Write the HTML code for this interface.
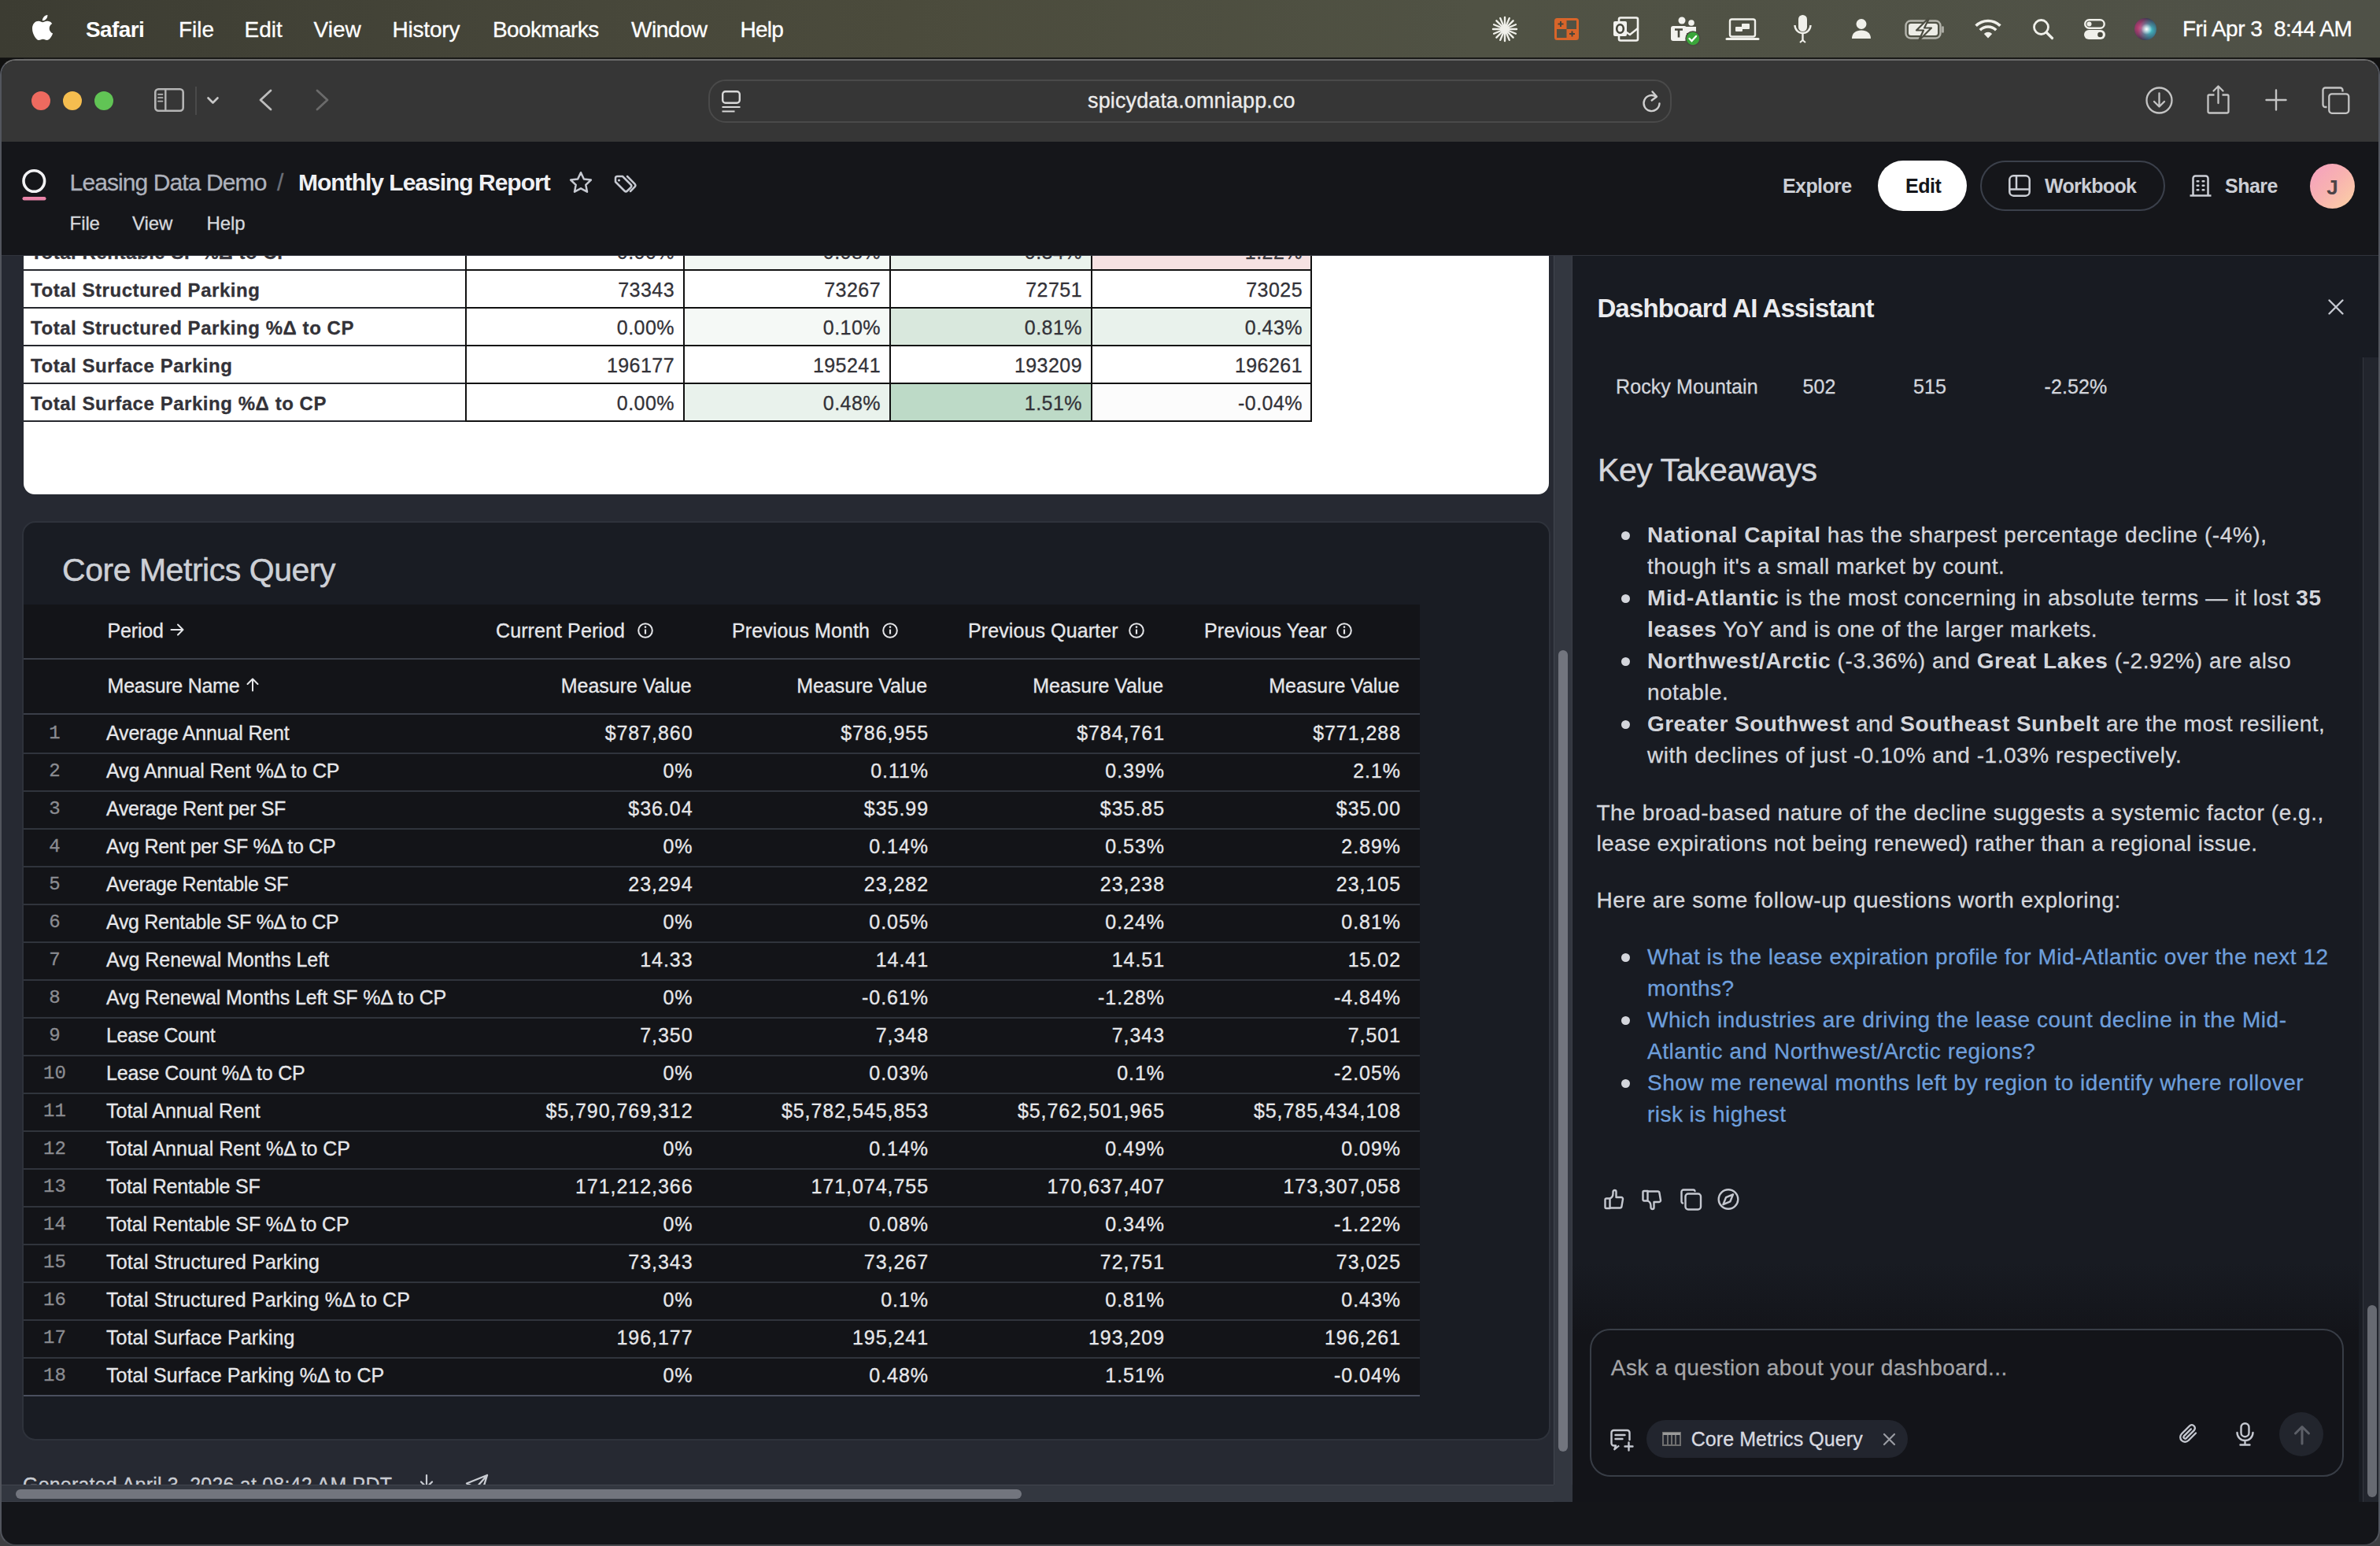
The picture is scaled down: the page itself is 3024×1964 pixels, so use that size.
<!DOCTYPE html><html><head><meta charset="utf-8"><style>
*{box-sizing:border-box;margin:0;padding:0}
html,body{width:3024px;height:1964px;overflow:hidden;background:#141519;font-family:"Liberation Sans",sans-serif;position:relative}
.a{position:absolute}
.t{position:absolute;white-space:nowrap;line-height:1;-webkit-text-stroke-width:0.3px}
.t b{-webkit-text-stroke-width:0}
svg{overflow:visible}
</style></head><body><div class="a" style="left:0px;top:0px;width:3024px;height:75px;background:linear-gradient(90deg,#3c3c32 0%,#47473a 25%,#4b4b3c 38%,#505244 62%,#4f5147 100%);"></div>
<div class="a" style="left:0px;top:73px;width:3024px;height:2px;background:#1a1a18;"></div>
<svg class="a" style="left:41px;top:19px;" width="26" height="32" viewBox="0 0 814 1000"><path fill="#fff" d="M788.1 340.9c-5.8 4.5-108.2 62.2-108.2 190.5 0 148.4 130.3 200.9 134.2 202.2-.6 3.2-20.7 71.9-68.7 141.9-42.8 61.6-87.5 123.1-155.5 123.1s-85.5-39.5-164-39.5c-76.5 0-103.7 40.8-165.9 40.8s-105.6-57-155.5-127C46.7 790.7 0 663 0 541.8c0-194.4 126.4-297.5 250.8-297.5 66.1 0 121.2 43.4 162.7 43.4 39.5 0 101.1-46 176.3-46 28.5 0 130.9 2.6 198.3 99.2zm-234-181.5c31.1-36.9 53.1-88.1 53.1-139.3 0-7.1-.6-14.3-1.9-20.1-50.6 1.9-110.8 33.7-147.1 75.8-28.5 32.4-55.1 83.6-55.1 135.5 0 7.8 1.3 15.6 1.9 18.1 3.2.6 8.4 1.3 13.6 1.3 45.4 0 102.5-30.4 135.5-71.3z"/></svg>
<div class="t" style="top:23.6px;font-size:28px;color:#fff;font-weight:700;-webkit-text-stroke-width:0;letter-spacing:-0.6px;left:109px;">Safari</div>
<div class="t" style="top:23.6px;font-size:28px;color:#fff;left:227px;-webkit-text-stroke:0.3px #fff;">File</div>
<div class="t" style="top:23.6px;font-size:28px;color:#fff;left:310.6px;-webkit-text-stroke:0.3px #fff;">Edit</div>
<div class="t" style="top:23.6px;font-size:28px;color:#fff;left:398.5px;-webkit-text-stroke:0.3px #fff;">View</div>
<div class="t" style="top:23.6px;font-size:28px;color:#fff;letter-spacing:-0.2px;left:498.5px;-webkit-text-stroke:0.3px #fff;">History</div>
<div class="t" style="top:23.6px;font-size:28px;color:#fff;letter-spacing:-0.6px;left:626px;-webkit-text-stroke:0.3px #fff;">Bookmarks</div>
<div class="t" style="top:23.6px;font-size:28px;color:#fff;letter-spacing:-0.5px;left:802px;-webkit-text-stroke:0.3px #fff;">Window</div>
<div class="t" style="top:23.6px;font-size:28px;color:#fff;letter-spacing:-0.8px;left:940.6px;-webkit-text-stroke:0.3px #fff;">Help</div>
<svg class="a" style="left:1896px;top:21px;" width="32" height="32" viewBox="0 0 32 32"><line x1="16" y1="16" x2="31.00" y2="16.00" stroke="#f0f0ea" stroke-width="2.4" stroke-linecap="round"/><line x1="16" y1="16" x2="29.86" y2="21.74" stroke="#f0f0ea" stroke-width="2.4" stroke-linecap="round"/><line x1="16" y1="16" x2="26.61" y2="26.61" stroke="#f0f0ea" stroke-width="2.4" stroke-linecap="round"/><line x1="16" y1="16" x2="21.74" y2="29.86" stroke="#f0f0ea" stroke-width="2.4" stroke-linecap="round"/><line x1="16" y1="16" x2="16.00" y2="31.00" stroke="#f0f0ea" stroke-width="2.4" stroke-linecap="round"/><line x1="16" y1="16" x2="10.26" y2="29.86" stroke="#f0f0ea" stroke-width="2.4" stroke-linecap="round"/><line x1="16" y1="16" x2="5.39" y2="26.61" stroke="#f0f0ea" stroke-width="2.4" stroke-linecap="round"/><line x1="16" y1="16" x2="2.14" y2="21.74" stroke="#f0f0ea" stroke-width="2.4" stroke-linecap="round"/><line x1="16" y1="16" x2="1.00" y2="16.00" stroke="#f0f0ea" stroke-width="2.4" stroke-linecap="round"/><line x1="16" y1="16" x2="2.14" y2="10.26" stroke="#f0f0ea" stroke-width="2.4" stroke-linecap="round"/><line x1="16" y1="16" x2="5.39" y2="5.39" stroke="#f0f0ea" stroke-width="2.4" stroke-linecap="round"/><line x1="16" y1="16" x2="10.26" y2="2.14" stroke="#f0f0ea" stroke-width="2.4" stroke-linecap="round"/><line x1="16" y1="16" x2="16.00" y2="1.00" stroke="#f0f0ea" stroke-width="2.4" stroke-linecap="round"/><line x1="16" y1="16" x2="21.74" y2="2.14" stroke="#f0f0ea" stroke-width="2.4" stroke-linecap="round"/><line x1="16" y1="16" x2="26.61" y2="5.39" stroke="#f0f0ea" stroke-width="2.4" stroke-linecap="round"/><line x1="16" y1="16" x2="29.86" y2="10.26" stroke="#f0f0ea" stroke-width="2.4" stroke-linecap="round"/></svg>
<svg class="a" style="left:1975px;top:23px;" width="31" height="28" viewBox="0 0 31 28"><rect x="1.5" y="1.5" width="28" height="25" rx="2" fill="none" stroke="#d8652a" stroke-width="3"/><rect x="1.5" y="1.5" width="14" height="12.5" fill="#d8652a"/><rect x="15.5" y="14" width="14" height="12.5" fill="#d8652a"/><path d="M4.5 7.5h7M8 4v7M19 20h7M22.5 16.5v7" stroke="#45453b" stroke-width="2"/></svg>
<svg class="a" style="left:2050px;top:21px;" width="33" height="32" viewBox="0 0 33 32"><rect x="7" y="1.5" width="24" height="29" rx="2" fill="none" stroke="#f2f2ee" stroke-width="2.6"/><path d="M12 17l9 6 10-8" fill="none" stroke="#f2f2ee" stroke-width="2.4"/><rect x="0" y="6" width="17" height="19" rx="2" fill="#f2f2ee"/><ellipse cx="8.5" cy="15.5" rx="4.3" ry="5.3" fill="none" stroke="#45463b" stroke-width="2.6"/></svg>
<svg class="a" style="left:2123px;top:21px;" width="38" height="37" viewBox="0 0 38 37"><circle cx="14" cy="5" r="4.5" fill="#f2f2ee"/><circle cx="26" cy="8" r="3.8" fill="#f2f2ee"/><path d="M18 13h14v8h-14z" fill="#f2f2ee"/><rect x="0" y="12" width="20" height="19" rx="3" fill="#f2f2ee"/><path d="M5 16.5h10M10 16.5v10" stroke="#45463b" stroke-width="2.6"/><circle cx="28" cy="28" r="9" fill="#3aa63a" stroke="#4a4b40" stroke-width="1.5"/><path d="M23.5 28l3 3 5.5-6" fill="none" stroke="#fff" stroke-width="2.4" stroke-linecap="round"/></svg>
<svg class="a" style="left:2193px;top:23px;" width="42" height="28" viewBox="0 0 42 28"><rect x="5" y="1.5" width="32" height="22" rx="2.5" fill="none" stroke="#f0f0ea" stroke-width="2.4"/><path d="M1 26.5h40" stroke="#f0f0ea" stroke-width="3" stroke-linecap="round"/><rect x="12" y="11" width="9" height="6" rx="1" fill="#f0f0ea"/><rect x="20" y="7" width="10" height="7" rx="1" fill="#f0f0ea"/></svg>
<svg class="a" style="left:2279px;top:19px;" width="23" height="37" viewBox="0 0 23 37"><rect x="6" y="0" width="11" height="21" rx="5.5" fill="#f0f0ea"/><path d="M1.5 13a10 10 0 0 0 20 0" fill="none" stroke="#f0f0ea" stroke-width="2.4"/><path d="M11.5 23v9" stroke="#f0f0ea" stroke-width="2.4"/><path d="M8 35l3.5-3 3.5 3" fill="none" stroke="#f0f0ea" stroke-width="2"/></svg>
<svg class="a" style="left:2353px;top:24px;" width="24" height="25" viewBox="0 0 24 25"><circle cx="12" cy="6.5" r="6.5" fill="#f0f0ea"/><path d="M0 25c0-7 5-10.5 12-10.5s12 3.5 12 10.5z" fill="#f0f0ea"/></svg>
<svg class="a" style="left:2420px;top:25px;" width="52" height="25" viewBox="0 0 52 25"><rect x="1.5" y="1.5" width="44" height="22" rx="6" fill="none" stroke="#b5b5ad" stroke-width="2.4"/><rect x="5" y="5" width="37" height="15" rx="3" fill="#ececE6"/><path d="M48.5 9.5v6" stroke="#b5b5ad" stroke-width="2.6" stroke-linecap="round"/><path d="M30 -1.5l-15 15h9l-6 13 16-16h-9l6-12z" fill="#ececE6" stroke="#4b4c41" stroke-width="2.2" stroke-linejoin="round"/></svg>
<svg class="a" style="left:2509px;top:24px;" width="34" height="25" viewBox="0 0 34 25"><path d="M17 24.5l-5.2-5.6a7.5 7.5 0 0 1 10.4 0z" fill="#f0f0ea"/><path d="M6.8 14.2a14.5 14.5 0 0 1 20.4 0" fill="none" stroke="#f0f0ea" stroke-width="3.6"/><path d="M1.6 8.8a22 22 0 0 1 30.8 0" fill="none" stroke="#f0f0ea" stroke-width="3.6"/></svg>
<svg class="a" style="left:2583px;top:24px;" width="26" height="26" viewBox="0 0 26 26"><circle cx="10.5" cy="10.5" r="9" fill="none" stroke="#f0f0ea" stroke-width="2.8"/><path d="M17 17l7.5 7.5" stroke="#f0f0ea" stroke-width="3.2" stroke-linecap="round"/></svg>
<svg class="a" style="left:2648px;top:24px;" width="27" height="26" viewBox="0 0 27 26"><rect x="1.2" y="1.2" width="24.5" height="10.5" rx="5.25" fill="none" stroke="#f0f0ea" stroke-width="2.4"/><circle cx="6.5" cy="6.5" r="3" fill="#f0f0ea"/><rect x="0" y="14" width="27" height="12" rx="6" fill="#f0f0ea"/><circle cx="20.5" cy="20" r="3.3" fill="#46473c"/></svg>
<svg class="a" style="left:2712px;top:23px;" width="28" height="28" viewBox="0 0 28 28"><defs><radialGradient id="sg1" cx="30%" cy="45%" r="55%"><stop offset="0" stop-color="#e0407a"/><stop offset="1" stop-color="#e0407a" stop-opacity="0"/></radialGradient><radialGradient id="sg2" cx="70%" cy="55%" r="55%"><stop offset="0" stop-color="#40c8d0"/><stop offset="1" stop-color="#40c8d0" stop-opacity="0"/></radialGradient><radialGradient id="sg3" cx="55%" cy="50%" r="25%"><stop offset="0" stop-color="#fff"/><stop offset="1" stop-color="#fff" stop-opacity="0"/></radialGradient></defs><circle cx="14" cy="14" r="14" fill="#3a3550"/><circle cx="14" cy="14" r="14" fill="url(#sg1)"/><circle cx="14" cy="14" r="14" fill="url(#sg2)"/><circle cx="14" cy="14" r="14" fill="url(#sg3)"/></svg>
<div class="t" style="top:22.6px;font-size:28px;color:#fff;letter-spacing:-0.489px;left:2773px;">Fri Apr 3&nbsp;&nbsp;8:44 AM</div>
<div class="a" style="left:0px;top:1938px;width:30px;height:26px;background:#3e3f42;"></div>
<div class="a" style="left:2994px;top:1938px;width:30px;height:26px;background:#3e3f42;"></div>
<div class="a" style="left:0px;top:74px;width:30px;height:26px;background:#101010;"></div>
<div class="a" style="left:2994px;top:74px;width:30px;height:26px;background:#101010;"></div>
<div class="a" style="left:0;top:75px;width:3024px;height:1889px;background:#141519;border-radius:20px;border:2px solid #52555d;border-top-color:#6c6c6c;border-bottom-color:#45474d"></div>
<div class="a" style="left:2px;top:77px;width:3020px;height:103px;background:#363636;border-radius:18px 18px 0 0"></div>
<div class="a" style="left:40px;top:116px;width:24px;height:24px;border-radius:50%;background:#ee6a5f"></div>
<div class="a" style="left:80px;top:116px;width:24px;height:24px;border-radius:50%;background:#f5bd4f"></div>
<div class="a" style="left:120px;top:116px;width:24px;height:24px;border-radius:50%;background:#61c455"></div>
<svg class="a" style="left:196px;top:112px;" width="38" height="30" viewBox="0 0 38 30"><rect x="1.3" y="1.3" width="35.4" height="27.4" rx="4" fill="none" stroke="#b4b4b4" stroke-width="2.6"/><path d="M14.3 1.5v27" stroke="#b4b4b4" stroke-width="2.4"/><path d="M5 7.8h5.5M5 12.2h5.5M5 16.6h5.5" stroke="#b4b4b4" stroke-width="1.8" stroke-linecap="round"/></svg>
<div class="a" style="left:248px;top:110px;width:2px;height:36px;background:#4a4a4a;"></div>
<svg class="a" style="left:263px;top:123px;" width="15" height="9" viewBox="0 0 15 9"><path d="M1.5 1.5l6 6 6-6" fill="none" stroke="#c8c8c8" stroke-width="2.6" stroke-linecap="round" stroke-linejoin="round"/></svg>
<svg class="a" style="left:328px;top:113px;" width="18" height="28" viewBox="0 0 18 28"><path d="M16 2l-13 12 13 12" fill="none" stroke="#bdbdbd" stroke-width="2.8" stroke-linecap="round" stroke-linejoin="round"/></svg>
<svg class="a" style="left:401px;top:113px;" width="18" height="28" viewBox="0 0 18 28"><path d="M2 2l13 12-13 12" fill="none" stroke="#6b6b6b" stroke-width="2.8" stroke-linecap="round" stroke-linejoin="round"/></svg>
<div class="a" style="left:900px;top:101px;width:1224px;height:55px;border-radius:22px;border:2px solid #4a4a4a;background:#363636"></div>
<svg class="a" style="left:917px;top:115px;" width="24" height="28" viewBox="0 0 24 28"><rect x="1.2" y="1.2" width="21.6" height="14.6" rx="3.5" fill="none" stroke="#d8d8d8" stroke-width="2.4"/><path d="M0.5 21h23M0.5 26.5h16" stroke="#d8d8d8" stroke-width="2.2"/></svg>
<div class="t" style="top:115.1px;font-size:27px;color:#ececec;letter-spacing:0.129px;left:1382px;-webkit-text-stroke:0.3px #ececec;">spicydata.omniapp.co</div>
<svg class="a" style="left:2087px;top:115px;" width="25" height="28" viewBox="0 0 25 28"><path d="M21.5 16.5a10 10 0 1 1-4.2-8.6" fill="none" stroke="#cfcfcf" stroke-width="2.4" stroke-linecap="round"/><path d="M12.5 1.5l5.5 6.2-6.3 4.8" fill="none" stroke="#cfcfcf" stroke-width="2.4" stroke-linecap="round" stroke-linejoin="round"/></svg>
<svg class="a" style="left:2726px;top:110px;" width="35" height="35" viewBox="0 0 35 35"><circle cx="17.5" cy="17.5" r="16" fill="none" stroke="#c4c4c4" stroke-width="2.3"/><path d="M17.5 8.5v17M11 19l6.5 6.5 6.5-6.5" fill="none" stroke="#c4c4c4" stroke-width="2.3" stroke-linecap="round" stroke-linejoin="round"/></svg>
<svg class="a" style="left:2804px;top:108px;" width="30" height="37" viewBox="0 0 30 37"><path d="M9.5 12.5h-6.5a1.5 1.5 0 0 0-1.5 1.5v19.5a2 2 0 0 0 2 2h22a2 2 0 0 0 2-2v-19.5a1.5 1.5 0 0 0-1.5-1.5h-6.5" fill="none" stroke="#c4c4c4" stroke-width="2.3"/><path d="M14.5 23v-21M8.5 7.5l6-6 6 6" fill="none" stroke="#c4c4c4" stroke-width="2.3" stroke-linecap="round" stroke-linejoin="round"/></svg>
<svg class="a" style="left:2878px;top:113px;" width="28" height="28" viewBox="0 0 28 28"><path d="M14 1.5v25M1.5 14h25" stroke="#c4c4c4" stroke-width="2.4" stroke-linecap="round"/></svg>
<svg class="a" style="left:2950px;top:110px;" width="36" height="35" viewBox="0 0 36 35"><path d="M6.5 26h-2a3 3 0 0 1-3-3v-18.5a3 3 0 0 1 3-3h19a3 3 0 0 1 3 3v2" fill="none" stroke="#c4c4c4" stroke-width="2.3"/><rect x="9.3" y="9.3" width="25" height="24.5" rx="3.5" fill="none" stroke="#c4c4c4" stroke-width="2.3"/></svg>
<div class="a" style="left:2px;top:180px;width:3020px;height:145px;background:#15161a;border-bottom:1px solid #30333c"></div>
<svg class="a" style="left:28px;top:214px;" width="31" height="41" viewBox="0 0 31 41"><circle cx="15.3" cy="16" r="13.3" fill="none" stroke="#f2f2f4" stroke-width="3.6"/><rect x="0.5" y="36" width="30" height="4.5" rx="2.2" fill="#e884a8"/></svg>
<div class="t" style="top:217.1px;font-size:30px;color:#aeb2bc;letter-spacing:-0.9px;left:88.6px;">Leasing Data Demo</div>
<div class="t" style="top:217.1px;font-size:30px;color:#6d717a;left:352px;">/</div>
<div class="t" style="top:217.1px;font-size:30px;color:#eff0f3;font-weight:700;-webkit-text-stroke-width:0;letter-spacing:-1.0px;left:379px;">Monthly Leasing Report</div>
<svg class="a" style="left:723px;top:217px;" width="30" height="29" viewBox="0 0 30 29"><path d="M15 2.2l3.9 8.3 9 1.1-6.6 6.2 1.7 8.9-8-4.4-8 4.4 1.7-8.9-6.6-6.2 9-1.1z" fill="none" stroke="#c6c9d1" stroke-width="2.5" stroke-linejoin="round"/></svg>
<svg class="a" style="left:780px;top:222px;" width="28" height="23" viewBox="0 0 28 23"><path d="M2 4.5a2.5 2.5 0 0 1 2.5-2.5h6.5l10.5 10.5a2.5 2.5 0 0 1 0 3.5l-4.5 4.5a2.5 2.5 0 0 1-3.5 0l-11.5-11.5z" fill="none" stroke="#c6c9d1" stroke-width="2.5" stroke-linejoin="round"/><circle cx="6.5" cy="7" r="1.6" fill="#c6c9d1"/><path d="M17 2l9.5 9.5a3 3 0 0 1 0 4l-5.5 5.5" fill="none" stroke="#c6c9d1" stroke-width="2.5" stroke-linecap="round"/></svg>
<div class="t" style="top:271.5px;font-size:24px;color:#d6d8dd;letter-spacing:-0.1px;left:88.6px;">File</div>
<div class="t" style="top:271.5px;font-size:24px;color:#d6d8dd;letter-spacing:-0.1px;left:168px;">View</div>
<div class="t" style="top:271.5px;font-size:24px;color:#d6d8dd;letter-spacing:-0.1px;left:262.5px;">Help</div>
<div class="t" style="top:223.8px;font-size:25px;color:#cbced5;font-weight:700;-webkit-text-stroke-width:0;letter-spacing:-0.6px;left:2265px;">Explore</div>
<div class="a" style="left:2386px;top:204px;width:113px;height:64px;border-radius:32px;background:#fff"></div>
<div class="t" style="top:223.8px;font-size:25px;color:#15161a;font-weight:700;-webkit-text-stroke-width:0;letter-spacing:-0.5px;left:2421px;">Edit</div>
<div class="a" style="left:2516px;top:204px;width:235px;height:64px;border-radius:32px;border:2px solid #3b404b"></div>
<svg class="a" style="left:2552px;top:222px;" width="28" height="28" viewBox="0 0 28 28"><rect x="1.3" y="1.3" width="25.4" height="25.4" rx="5" fill="none" stroke="#cbced5" stroke-width="2.5"/><path d="M10 1.5v17M1.5 18.5h25" stroke="#cbced5" stroke-width="2.5"/></svg>
<div class="t" style="top:223.8px;font-size:25px;color:#cbced5;font-weight:700;-webkit-text-stroke-width:0;letter-spacing:-0.7px;left:2598px;">Workbook</div>
<svg class="a" style="left:2782px;top:222px;" width="28" height="28" viewBox="0 0 28 28"><path d="M4.5 26.5v-22a3 3 0 0 1 3-3h13a3 3 0 0 1 3 3v22M0.5 26.5h27" fill="none" stroke="#cbced5" stroke-width="2.5"/><g fill="#cbced5"><rect x="8.5" y="7" width="4" height="2.6" rx="1"/><rect x="15.5" y="7" width="4" height="2.6" rx="1"/><rect x="8.5" y="12.5" width="4" height="2.6" rx="1"/><rect x="15.5" y="12.5" width="4" height="2.6" rx="1"/><rect x="8.5" y="18" width="4" height="2.6" rx="1"/><rect x="15.5" y="18" width="4" height="2.6" rx="1"/></g></svg>
<div class="t" style="top:223.8px;font-size:25px;color:#cbced5;font-weight:700;-webkit-text-stroke-width:0;letter-spacing:-0.5px;left:2827px;">Share</div>
<div class="a" style="left:2935px;top:208px;width:57px;height:57px;border-radius:50%;background:linear-gradient(135deg,#f59fc0 0%,#f8b3b0 50%,#fcd2a4 100%)"></div>
<div class="t" style="top:225.0px;font-size:26px;color:#4d4447;font-weight:700;-webkit-text-stroke-width:0;left:2963.5px;transform:translateX(-50%);">J</div>
<div class="a" style="left:2px;top:325px;width:1996px;height:1583px;background:#262932;"></div>
<div class="a" style="left:30px;top:325px;width:1938px;height:303px;background:#fff;border-radius:0 0 14px 14px"></div>
<div class="a" style="left:870px;top:325px;width:261px;height:18px;background:#f3f8f4;"></div>
<div class="a" style="left:1132px;top:325px;width:255px;height:18px;background:#eaf3ed;"></div>
<div class="a" style="left:1388px;top:325px;width:278px;height:18px;background:#f6e1e2;"></div>
<div class="a" style="left:870px;top:391px;width:261px;height:48px;background:#f5f9f6;"></div>
<div class="a" style="left:1132px;top:391px;width:255px;height:48px;background:#d9e8dd;"></div>
<div class="a" style="left:1388px;top:391px;width:278px;height:48px;background:#e9f2ec;"></div>
<div class="a" style="left:870px;top:487px;width:261px;height:48px;background:#e9f2ec;"></div>
<div class="a" style="left:1132px;top:487px;width:255px;height:48px;background:#bddac7;"></div>
<div class="a" style="left:1388px;top:487px;width:278px;height:48px;background:#fcfcfc;"></div>
<div class="a" style="left:30px;top:342px;width:562px;height:2px;background:#26282e;"></div>
<div class="a" style="left:592px;top:342px;width:1075px;height:2px;background:#111;"></div>
<div class="a" style="left:30px;top:390px;width:562px;height:2px;background:#26282e;"></div>
<div class="a" style="left:592px;top:390px;width:1075px;height:2px;background:#111;"></div>
<div class="a" style="left:30px;top:438px;width:562px;height:2px;background:#26282e;"></div>
<div class="a" style="left:592px;top:438px;width:1075px;height:2px;background:#111;"></div>
<div class="a" style="left:30px;top:486px;width:562px;height:2px;background:#26282e;"></div>
<div class="a" style="left:592px;top:486px;width:1075px;height:2px;background:#111;"></div>
<div class="a" style="left:30px;top:534px;width:562px;height:2px;background:#26282e;"></div>
<div class="a" style="left:592px;top:534px;width:1075px;height:2px;background:#111;"></div>
<div class="a" style="left:591px;top:325px;width:2px;height:211px;background:#111;"></div>
<div class="a" style="left:868px;top:325px;width:2px;height:211px;background:#111;"></div>
<div class="a" style="left:1130px;top:325px;width:2px;height:211px;background:#111;"></div>
<div class="a" style="left:1386px;top:325px;width:2px;height:211px;background:#111;"></div>
<div class="a" style="left:1665px;top:325px;width:2px;height:211px;background:#111;"></div>
<div class="a" style="left:30px;top:325px;width:1938px;height:300px;overflow:hidden">
<div class="t" style="left:9px;top:-16.3px;font-size:24px;font-weight:700;color:#333238;letter-spacing:0.55px">Total Rentable SF %Δ to CP</div>
<div class="t" style="right:1111px;top:-17.2px;font-size:25px;color:#333238;letter-spacing:0.45px">0.00%</div>
<div class="t" style="right:849px;top:-17.2px;font-size:25px;color:#333238;letter-spacing:0.45px">0.08%</div>
<div class="t" style="right:593px;top:-17.2px;font-size:25px;color:#333238;letter-spacing:0.45px">0.34%</div>
<div class="t" style="right:313px;top:-17.2px;font-size:25px;color:#333238;letter-spacing:0.45px">-1.22%</div>
<div class="t" style="left:9px;top:31.7px;font-size:24px;font-weight:700;color:#333238;letter-spacing:0.55px">Total Structured Parking</div>
<div class="t" style="right:1111px;top:30.8px;font-size:25px;color:#333238;letter-spacing:0.45px">73343</div>
<div class="t" style="right:849px;top:30.8px;font-size:25px;color:#333238;letter-spacing:0.45px">73267</div>
<div class="t" style="right:593px;top:30.8px;font-size:25px;color:#333238;letter-spacing:0.45px">72751</div>
<div class="t" style="right:313px;top:30.8px;font-size:25px;color:#333238;letter-spacing:0.45px">73025</div>
<div class="t" style="left:9px;top:79.7px;font-size:24px;font-weight:700;color:#333238;letter-spacing:0.55px">Total Structured Parking %Δ to CP</div>
<div class="t" style="right:1111px;top:78.8px;font-size:25px;color:#333238;letter-spacing:0.45px">0.00%</div>
<div class="t" style="right:849px;top:78.8px;font-size:25px;color:#333238;letter-spacing:0.45px">0.10%</div>
<div class="t" style="right:593px;top:78.8px;font-size:25px;color:#333238;letter-spacing:0.45px">0.81%</div>
<div class="t" style="right:313px;top:78.8px;font-size:25px;color:#333238;letter-spacing:0.45px">0.43%</div>
<div class="t" style="left:9px;top:127.7px;font-size:24px;font-weight:700;color:#333238;letter-spacing:0.55px">Total Surface Parking</div>
<div class="t" style="right:1111px;top:126.8px;font-size:25px;color:#333238;letter-spacing:0.45px">196177</div>
<div class="t" style="right:849px;top:126.8px;font-size:25px;color:#333238;letter-spacing:0.45px">195241</div>
<div class="t" style="right:593px;top:126.8px;font-size:25px;color:#333238;letter-spacing:0.45px">193209</div>
<div class="t" style="right:313px;top:126.8px;font-size:25px;color:#333238;letter-spacing:0.45px">196261</div>
<div class="t" style="left:9px;top:175.7px;font-size:24px;font-weight:700;color:#333238;letter-spacing:0.55px">Total Surface Parking %Δ to CP</div>
<div class="t" style="right:1111px;top:174.8px;font-size:25px;color:#333238;letter-spacing:0.45px">0.00%</div>
<div class="t" style="right:849px;top:174.8px;font-size:25px;color:#333238;letter-spacing:0.45px">0.48%</div>
<div class="t" style="right:593px;top:174.8px;font-size:25px;color:#333238;letter-spacing:0.45px">1.51%</div>
<div class="t" style="right:313px;top:174.8px;font-size:25px;color:#333238;letter-spacing:0.45px">-0.04%</div>
</div>
<div class="a" style="left:28px;top:662px;width:1942px;height:1168px;background:#191c23;border:2px solid #2e323b;border-radius:17px"></div>
<div class="t" style="top:704.0px;font-size:41px;color:#cdd0d6;letter-spacing:-0.466px;left:79px;-webkit-text-stroke:0.5px #cdd0d6;">Core Metrics Query</div>
<div class="a" style="left:30px;top:768px;width:1774px;height:1004px;background:#131418;"></div>
<div class="a" style="left:30px;top:836px;width:1774px;height:2px;background:#3a3e48;"></div>
<div class="a" style="left:30px;top:906px;width:1774px;height:2px;background:#3a3e48;"></div>
<div class="t" style="top:788.8px;font-size:25px;color:#e6e7ea;letter-spacing:-0.173px;left:136.6px;">Period</div>
<svg class="a" style="left:216px;top:792px;" width="18" height="16" viewBox="0 0 18 16"><path d="M1.5 8h15M10 1.5l6.5 6.5-6.5 6.5" fill="none" stroke="#e6e7ea" stroke-width="2" stroke-linecap="round" stroke-linejoin="round"/></svg>
<div class="t" style="top:858.8px;font-size:25px;color:#e6e7ea;letter-spacing:-0.264px;left:136.6px;">Measure Name</div>
<svg class="a" style="left:313px;top:861px;" width="16" height="18" viewBox="0 0 16 18"><path d="M8 16.5v-15M1.5 8l6.5-6.5 6.5 6.5" fill="none" stroke="#e6e7ea" stroke-width="2" stroke-linecap="round" stroke-linejoin="round"/></svg>
<div class="t" style="top:788.8px;font-size:25px;color:#e6e7ea;letter-spacing:0.1px;left:630px;">Current Period</div>
<svg class="a" style="left:810px;top:791px;" width="20" height="20" viewBox="0 0 20 20"><circle cx="10" cy="10" r="8.8" fill="none" stroke="#e4e5e8" stroke-width="2"/><path d="M10 8.5v6" stroke="#e4e5e8" stroke-width="2.2"/><circle cx="10" cy="5.6" r="1.3" fill="#e4e5e8"/></svg>
<div class="t" style="top:788.8px;font-size:25px;color:#e6e7ea;letter-spacing:0.1px;left:930px;">Previous Month</div>
<svg class="a" style="left:1120.5px;top:791px;" width="20" height="20" viewBox="0 0 20 20"><circle cx="10" cy="10" r="8.8" fill="none" stroke="#e4e5e8" stroke-width="2"/><path d="M10 8.5v6" stroke="#e4e5e8" stroke-width="2.2"/><circle cx="10" cy="5.6" r="1.3" fill="#e4e5e8"/></svg>
<div class="t" style="top:788.8px;font-size:25px;color:#e6e7ea;letter-spacing:0.1px;left:1230px;">Previous Quarter</div>
<svg class="a" style="left:1434px;top:791px;" width="20" height="20" viewBox="0 0 20 20"><circle cx="10" cy="10" r="8.8" fill="none" stroke="#e4e5e8" stroke-width="2"/><path d="M10 8.5v6" stroke="#e4e5e8" stroke-width="2.2"/><circle cx="10" cy="5.6" r="1.3" fill="#e4e5e8"/></svg>
<div class="t" style="top:788.8px;font-size:25px;color:#e6e7ea;letter-spacing:0.1px;left:1530px;">Previous Year</div>
<svg class="a" style="left:1697.5px;top:791px;" width="20" height="20" viewBox="0 0 20 20"><circle cx="10" cy="10" r="8.8" fill="none" stroke="#e4e5e8" stroke-width="2"/><path d="M10 8.5v6" stroke="#e4e5e8" stroke-width="2.2"/><circle cx="10" cy="5.6" r="1.3" fill="#e4e5e8"/></svg>
<div class="t" style="top:858.8px;font-size:25px;color:#e6e7ea;letter-spacing:-0.05px;right:2145.5px;">Measure Value</div>
<div class="t" style="top:858.8px;font-size:25px;color:#e6e7ea;letter-spacing:-0.05px;right:1846px;">Measure Value</div>
<div class="t" style="top:858.8px;font-size:25px;color:#e6e7ea;letter-spacing:-0.05px;right:1546px;">Measure Value</div>
<div class="t" style="top:858.8px;font-size:25px;color:#e6e7ea;letter-spacing:-0.05px;right:1246px;">Measure Value</div>
<div class="t" style="top:920.1px;font-size:24px;color:#8b8c91;font-family:'Liberation Mono',monospace;left:69.5px;transform:translateX(-50%);">1</div>
<div class="t" style="top:919.2px;font-size:25px;color:#e6e7ea;letter-spacing:-0.174px;left:135px;">Average Annual Rent</div>
<div class="t" style="top:919.2px;font-size:25px;color:#e6e7ea;letter-spacing:0.95px;right:2143.5px;">$787,860</div>
<div class="t" style="top:919.2px;font-size:25px;color:#e6e7ea;letter-spacing:0.95px;right:1844px;">$786,955</div>
<div class="t" style="top:919.2px;font-size:25px;color:#e6e7ea;letter-spacing:0.95px;right:1544px;">$784,761</div>
<div class="t" style="top:919.2px;font-size:25px;color:#e6e7ea;letter-spacing:0.95px;right:1244px;">$771,288</div>
<div class="a" style="left:30px;top:956px;width:1774px;height:2px;background:#30343c;"></div>
<div class="t" style="top:968.1px;font-size:24px;color:#8b8c91;font-family:'Liberation Mono',monospace;left:69.5px;transform:translateX(-50%);">2</div>
<div class="t" style="top:967.2px;font-size:25px;color:#e6e7ea;letter-spacing:-0.142px;left:135px;">Avg Annual Rent %Δ to CP</div>
<div class="t" style="top:967.2px;font-size:25px;color:#e6e7ea;letter-spacing:0.95px;right:2143.5px;">0%</div>
<div class="t" style="top:967.2px;font-size:25px;color:#e6e7ea;letter-spacing:0.95px;right:1844px;">0.11%</div>
<div class="t" style="top:967.2px;font-size:25px;color:#e6e7ea;letter-spacing:0.95px;right:1544px;">0.39%</div>
<div class="t" style="top:967.2px;font-size:25px;color:#e6e7ea;letter-spacing:0.95px;right:1244px;">2.1%</div>
<div class="a" style="left:30px;top:1004px;width:1774px;height:2px;background:#30343c;"></div>
<div class="t" style="top:1016.1px;font-size:24px;color:#8b8c91;font-family:'Liberation Mono',monospace;left:69.5px;transform:translateX(-50%);">3</div>
<div class="t" style="top:1015.2px;font-size:25px;color:#e6e7ea;letter-spacing:-0.333px;left:135px;">Average Rent per SF</div>
<div class="t" style="top:1015.2px;font-size:25px;color:#e6e7ea;letter-spacing:0.95px;right:2143.5px;">$36.04</div>
<div class="t" style="top:1015.2px;font-size:25px;color:#e6e7ea;letter-spacing:0.95px;right:1844px;">$35.99</div>
<div class="t" style="top:1015.2px;font-size:25px;color:#e6e7ea;letter-spacing:0.95px;right:1544px;">$35.85</div>
<div class="t" style="top:1015.2px;font-size:25px;color:#e6e7ea;letter-spacing:0.95px;right:1244px;">$35.00</div>
<div class="a" style="left:30px;top:1052px;width:1774px;height:2px;background:#30343c;"></div>
<div class="t" style="top:1064.1px;font-size:24px;color:#8b8c91;font-family:'Liberation Mono',monospace;left:69.5px;transform:translateX(-50%);">4</div>
<div class="t" style="top:1063.2px;font-size:25px;color:#e6e7ea;letter-spacing:-0.293px;left:135px;">Avg Rent per SF %Δ to CP</div>
<div class="t" style="top:1063.2px;font-size:25px;color:#e6e7ea;letter-spacing:0.95px;right:2143.5px;">0%</div>
<div class="t" style="top:1063.2px;font-size:25px;color:#e6e7ea;letter-spacing:0.95px;right:1844px;">0.14%</div>
<div class="t" style="top:1063.2px;font-size:25px;color:#e6e7ea;letter-spacing:0.95px;right:1544px;">0.53%</div>
<div class="t" style="top:1063.2px;font-size:25px;color:#e6e7ea;letter-spacing:0.95px;right:1244px;">2.89%</div>
<div class="a" style="left:30px;top:1100px;width:1774px;height:2px;background:#30343c;"></div>
<div class="t" style="top:1112.1px;font-size:24px;color:#8b8c91;font-family:'Liberation Mono',monospace;left:69.5px;transform:translateX(-50%);">5</div>
<div class="t" style="top:1111.2px;font-size:25px;color:#e6e7ea;letter-spacing:-0.388px;left:135px;">Average Rentable SF</div>
<div class="t" style="top:1111.2px;font-size:25px;color:#e6e7ea;letter-spacing:0.95px;right:2143.5px;">23,294</div>
<div class="t" style="top:1111.2px;font-size:25px;color:#e6e7ea;letter-spacing:0.95px;right:1844px;">23,282</div>
<div class="t" style="top:1111.2px;font-size:25px;color:#e6e7ea;letter-spacing:0.95px;right:1544px;">23,238</div>
<div class="t" style="top:1111.2px;font-size:25px;color:#e6e7ea;letter-spacing:0.95px;right:1244px;">23,105</div>
<div class="a" style="left:30px;top:1148px;width:1774px;height:2px;background:#30343c;"></div>
<div class="t" style="top:1160.1px;font-size:24px;color:#8b8c91;font-family:'Liberation Mono',monospace;left:69.5px;transform:translateX(-50%);">6</div>
<div class="t" style="top:1159.2px;font-size:25px;color:#e6e7ea;letter-spacing:-0.301px;left:135px;">Avg Rentable SF %Δ to CP</div>
<div class="t" style="top:1159.2px;font-size:25px;color:#e6e7ea;letter-spacing:0.95px;right:2143.5px;">0%</div>
<div class="t" style="top:1159.2px;font-size:25px;color:#e6e7ea;letter-spacing:0.95px;right:1844px;">0.05%</div>
<div class="t" style="top:1159.2px;font-size:25px;color:#e6e7ea;letter-spacing:0.95px;right:1544px;">0.24%</div>
<div class="t" style="top:1159.2px;font-size:25px;color:#e6e7ea;letter-spacing:0.95px;right:1244px;">0.81%</div>
<div class="a" style="left:30px;top:1196px;width:1774px;height:2px;background:#30343c;"></div>
<div class="t" style="top:1208.1px;font-size:24px;color:#8b8c91;font-family:'Liberation Mono',monospace;left:69.5px;transform:translateX(-50%);">7</div>
<div class="t" style="top:1207.2px;font-size:25px;color:#e6e7ea;letter-spacing:-0.065px;left:135px;">Avg Renewal Months Left</div>
<div class="t" style="top:1207.2px;font-size:25px;color:#e6e7ea;letter-spacing:0.95px;right:2143.5px;">14.33</div>
<div class="t" style="top:1207.2px;font-size:25px;color:#e6e7ea;letter-spacing:0.95px;right:1844px;">14.41</div>
<div class="t" style="top:1207.2px;font-size:25px;color:#e6e7ea;letter-spacing:0.95px;right:1544px;">14.51</div>
<div class="t" style="top:1207.2px;font-size:25px;color:#e6e7ea;letter-spacing:0.95px;right:1244px;">15.02</div>
<div class="a" style="left:30px;top:1244px;width:1774px;height:2px;background:#30343c;"></div>
<div class="t" style="top:1256.1px;font-size:24px;color:#8b8c91;font-family:'Liberation Mono',monospace;left:69.5px;transform:translateX(-50%);">8</div>
<div class="t" style="top:1255.2px;font-size:25px;color:#e6e7ea;letter-spacing:-0.149px;left:135px;">Avg Renewal Months Left SF %Δ to CP</div>
<div class="t" style="top:1255.2px;font-size:25px;color:#e6e7ea;letter-spacing:0.95px;right:2143.5px;">0%</div>
<div class="t" style="top:1255.2px;font-size:25px;color:#e6e7ea;letter-spacing:0.95px;right:1844px;">-0.61%</div>
<div class="t" style="top:1255.2px;font-size:25px;color:#e6e7ea;letter-spacing:0.95px;right:1544px;">-1.28%</div>
<div class="t" style="top:1255.2px;font-size:25px;color:#e6e7ea;letter-spacing:0.95px;right:1244px;">-4.84%</div>
<div class="a" style="left:30px;top:1292px;width:1774px;height:2px;background:#30343c;"></div>
<div class="t" style="top:1304.1px;font-size:24px;color:#8b8c91;font-family:'Liberation Mono',monospace;left:69.5px;transform:translateX(-50%);">9</div>
<div class="t" style="top:1303.2px;font-size:25px;color:#e6e7ea;letter-spacing:-0.308px;left:135px;">Lease Count</div>
<div class="t" style="top:1303.2px;font-size:25px;color:#e6e7ea;letter-spacing:0.95px;right:2143.5px;">7,350</div>
<div class="t" style="top:1303.2px;font-size:25px;color:#e6e7ea;letter-spacing:0.95px;right:1844px;">7,348</div>
<div class="t" style="top:1303.2px;font-size:25px;color:#e6e7ea;letter-spacing:0.95px;right:1544px;">7,343</div>
<div class="t" style="top:1303.2px;font-size:25px;color:#e6e7ea;letter-spacing:0.95px;right:1244px;">7,501</div>
<div class="a" style="left:30px;top:1340px;width:1774px;height:2px;background:#30343c;"></div>
<div class="t" style="top:1352.1px;font-size:24px;color:#8b8c91;font-family:'Liberation Mono',monospace;left:69.5px;transform:translateX(-50%);">10</div>
<div class="t" style="top:1351.2px;font-size:25px;color:#e6e7ea;letter-spacing:-0.155px;left:135px;">Lease Count %Δ to CP</div>
<div class="t" style="top:1351.2px;font-size:25px;color:#e6e7ea;letter-spacing:0.95px;right:2143.5px;">0%</div>
<div class="t" style="top:1351.2px;font-size:25px;color:#e6e7ea;letter-spacing:0.95px;right:1844px;">0.03%</div>
<div class="t" style="top:1351.2px;font-size:25px;color:#e6e7ea;letter-spacing:0.95px;right:1544px;">0.1%</div>
<div class="t" style="top:1351.2px;font-size:25px;color:#e6e7ea;letter-spacing:0.95px;right:1244px;">-2.05%</div>
<div class="a" style="left:30px;top:1388px;width:1774px;height:2px;background:#30343c;"></div>
<div class="t" style="top:1400.1px;font-size:24px;color:#8b8c91;font-family:'Liberation Mono',monospace;left:69.5px;transform:translateX(-50%);">11</div>
<div class="t" style="top:1399.2px;font-size:25px;color:#e6e7ea;letter-spacing:-0.012px;left:135px;">Total Annual Rent</div>
<div class="t" style="top:1399.2px;font-size:25px;color:#e6e7ea;letter-spacing:0.95px;right:2143.5px;">$5,790,769,312</div>
<div class="t" style="top:1399.2px;font-size:25px;color:#e6e7ea;letter-spacing:0.95px;right:1844px;">$5,782,545,853</div>
<div class="t" style="top:1399.2px;font-size:25px;color:#e6e7ea;letter-spacing:0.95px;right:1544px;">$5,762,501,965</div>
<div class="t" style="top:1399.2px;font-size:25px;color:#e6e7ea;letter-spacing:0.95px;right:1244px;">$5,785,434,108</div>
<div class="a" style="left:30px;top:1436px;width:1774px;height:2px;background:#30343c;"></div>
<div class="t" style="top:1448.1px;font-size:24px;color:#8b8c91;font-family:'Liberation Mono',monospace;left:69.5px;transform:translateX(-50%);">12</div>
<div class="t" style="top:1447.2px;font-size:25px;color:#e6e7ea;letter-spacing:0.003px;left:135px;">Total Annual Rent %Δ to CP</div>
<div class="t" style="top:1447.2px;font-size:25px;color:#e6e7ea;letter-spacing:0.95px;right:2143.5px;">0%</div>
<div class="t" style="top:1447.2px;font-size:25px;color:#e6e7ea;letter-spacing:0.95px;right:1844px;">0.14%</div>
<div class="t" style="top:1447.2px;font-size:25px;color:#e6e7ea;letter-spacing:0.95px;right:1544px;">0.49%</div>
<div class="t" style="top:1447.2px;font-size:25px;color:#e6e7ea;letter-spacing:0.95px;right:1244px;">0.09%</div>
<div class="a" style="left:30px;top:1484px;width:1774px;height:2px;background:#30343c;"></div>
<div class="t" style="top:1496.1px;font-size:24px;color:#8b8c91;font-family:'Liberation Mono',monospace;left:69.5px;transform:translateX(-50%);">13</div>
<div class="t" style="top:1495.2px;font-size:25px;color:#e6e7ea;letter-spacing:-0.182px;left:135px;">Total Rentable SF</div>
<div class="t" style="top:1495.2px;font-size:25px;color:#e6e7ea;letter-spacing:0.95px;right:2143.5px;">171,212,366</div>
<div class="t" style="top:1495.2px;font-size:25px;color:#e6e7ea;letter-spacing:0.95px;right:1844px;">171,074,755</div>
<div class="t" style="top:1495.2px;font-size:25px;color:#e6e7ea;letter-spacing:0.95px;right:1544px;">170,637,407</div>
<div class="t" style="top:1495.2px;font-size:25px;color:#e6e7ea;letter-spacing:0.95px;right:1244px;">173,307,058</div>
<div class="a" style="left:30px;top:1532px;width:1774px;height:2px;background:#30343c;"></div>
<div class="t" style="top:1544.1px;font-size:24px;color:#8b8c91;font-family:'Liberation Mono',monospace;left:69.5px;transform:translateX(-50%);">14</div>
<div class="t" style="top:1543.2px;font-size:25px;color:#e6e7ea;letter-spacing:-0.16px;left:135px;">Total Rentable SF %Δ to CP</div>
<div class="t" style="top:1543.2px;font-size:25px;color:#e6e7ea;letter-spacing:0.95px;right:2143.5px;">0%</div>
<div class="t" style="top:1543.2px;font-size:25px;color:#e6e7ea;letter-spacing:0.95px;right:1844px;">0.08%</div>
<div class="t" style="top:1543.2px;font-size:25px;color:#e6e7ea;letter-spacing:0.95px;right:1544px;">0.34%</div>
<div class="t" style="top:1543.2px;font-size:25px;color:#e6e7ea;letter-spacing:0.95px;right:1244px;">-1.22%</div>
<div class="a" style="left:30px;top:1580px;width:1774px;height:2px;background:#30343c;"></div>
<div class="t" style="top:1592.1px;font-size:24px;color:#8b8c91;font-family:'Liberation Mono',monospace;left:69.5px;transform:translateX(-50%);">15</div>
<div class="t" style="top:1591.2px;font-size:25px;color:#e6e7ea;letter-spacing:0.183px;left:135px;">Total Structured Parking</div>
<div class="t" style="top:1591.2px;font-size:25px;color:#e6e7ea;letter-spacing:0.95px;right:2143.5px;">73,343</div>
<div class="t" style="top:1591.2px;font-size:25px;color:#e6e7ea;letter-spacing:0.95px;right:1844px;">73,267</div>
<div class="t" style="top:1591.2px;font-size:25px;color:#e6e7ea;letter-spacing:0.95px;right:1544px;">72,751</div>
<div class="t" style="top:1591.2px;font-size:25px;color:#e6e7ea;letter-spacing:0.95px;right:1244px;">73,025</div>
<div class="a" style="left:30px;top:1628px;width:1774px;height:2px;background:#30343c;"></div>
<div class="t" style="top:1640.1px;font-size:24px;color:#8b8c91;font-family:'Liberation Mono',monospace;left:69.5px;transform:translateX(-50%);">16</div>
<div class="t" style="top:1639.2px;font-size:25px;color:#e6e7ea;letter-spacing:0.164px;left:135px;">Total Structured Parking %Δ to CP</div>
<div class="t" style="top:1639.2px;font-size:25px;color:#e6e7ea;letter-spacing:0.95px;right:2143.5px;">0%</div>
<div class="t" style="top:1639.2px;font-size:25px;color:#e6e7ea;letter-spacing:0.95px;right:1844px;">0.1%</div>
<div class="t" style="top:1639.2px;font-size:25px;color:#e6e7ea;letter-spacing:0.95px;right:1544px;">0.81%</div>
<div class="t" style="top:1639.2px;font-size:25px;color:#e6e7ea;letter-spacing:0.95px;right:1244px;">0.43%</div>
<div class="a" style="left:30px;top:1676px;width:1774px;height:2px;background:#30343c;"></div>
<div class="t" style="top:1688.1px;font-size:24px;color:#8b8c91;font-family:'Liberation Mono',monospace;left:69.5px;transform:translateX(-50%);">17</div>
<div class="t" style="top:1687.2px;font-size:25px;color:#e6e7ea;letter-spacing:0.089px;left:135px;">Total Surface Parking</div>
<div class="t" style="top:1687.2px;font-size:25px;color:#e6e7ea;letter-spacing:0.95px;right:2143.5px;">196,177</div>
<div class="t" style="top:1687.2px;font-size:25px;color:#e6e7ea;letter-spacing:0.95px;right:1844px;">195,241</div>
<div class="t" style="top:1687.2px;font-size:25px;color:#e6e7ea;letter-spacing:0.95px;right:1544px;">193,209</div>
<div class="t" style="top:1687.2px;font-size:25px;color:#e6e7ea;letter-spacing:0.95px;right:1244px;">196,261</div>
<div class="a" style="left:30px;top:1724px;width:1774px;height:2px;background:#30343c;"></div>
<div class="t" style="top:1736.1px;font-size:24px;color:#8b8c91;font-family:'Liberation Mono',monospace;left:69.5px;transform:translateX(-50%);">18</div>
<div class="t" style="top:1735.2px;font-size:25px;color:#e6e7ea;letter-spacing:0.055px;left:135px;">Total Surface Parking %Δ to CP</div>
<div class="t" style="top:1735.2px;font-size:25px;color:#e6e7ea;letter-spacing:0.95px;right:2143.5px;">0%</div>
<div class="t" style="top:1735.2px;font-size:25px;color:#e6e7ea;letter-spacing:0.95px;right:1844px;">0.48%</div>
<div class="t" style="top:1735.2px;font-size:25px;color:#e6e7ea;letter-spacing:0.95px;right:1544px;">1.51%</div>
<div class="t" style="top:1735.2px;font-size:25px;color:#e6e7ea;letter-spacing:0.95px;right:1244px;">-0.04%</div>
<div class="a" style="left:30px;top:1772px;width:1774px;height:2px;background:#4a4f5e;"></div>
<div class="a" style="left:2px;top:1860px;width:1972px;height:26px;overflow:hidden">
<div class="t" style="left:27px;top:14.3px;font-size:25px;color:#c9ccd2;letter-spacing:0.2px">Generated April 3, 2026 at 08:42 AM PDT</div>
<svg class="a" style="left:531px;top:13px" width="18" height="20" viewBox="0 0 18 20"><path d="M9 1v15M2 9.5l7 7 7-7" fill="none" stroke="#c9ccd2" stroke-width="2.2" stroke-linecap="round" stroke-linejoin="round"/></svg>
<svg class="a" style="left:588px;top:12px" width="32" height="30" viewBox="0 0 32 30"><path d="M3 12.5l26-10.5-8 26-6-10z M15 18l14-16" fill="none" stroke="#c9ccd2" stroke-width="2.3" stroke-linejoin="round" stroke-linecap="round"/></svg>
</div>
<div class="a" style="left:1974px;top:325px;width:24px;height:1561px;background:#333740;border-left:1px solid #42464f;border-right:1px solid #3b3e47"></div>
<div class="a" style="left:1980px;top:826px;width:12px;height:1018px;border-radius:6px;background:#72757e"></div>
<div class="a" style="left:2px;top:1886px;width:1972px;height:22px;background:#333740;border-top:1px solid #42464f;border-bottom:1px solid #3b3f48"></div>
<div class="a" style="left:1974px;top:1886px;width:24px;height:22px;background:#333740;"></div>
<div class="a" style="left:20px;top:1892px;width:1278px;height:12px;border-radius:6px;background:#72757e"></div>
<div class="a" style="left:1998px;top:325px;width:1024px;height:1583px;background:#181b22;"></div>
<div class="a" style="left:1998px;top:1605px;width:1004px;height:303px;background:linear-gradient(180deg,#181b22 0%,#15171d 18%,#131419 30%,#131419 100%);"></div>
<div class="t" style="top:374.6px;font-size:33px;color:#ebecef;font-weight:700;-webkit-text-stroke-width:0;letter-spacing:-0.848px;left:2029.4px;">Dashboard AI Assistant</div>
<svg class="a" style="left:2958px;top:380px;" width="20" height="20" viewBox="0 0 20 20"><path d="M1.5 1.5l17 17M18.5 1.5l-17 17" stroke="#c5c8d0" stroke-width="2.4" stroke-linecap="round"/></svg>
<div class="t" style="top:478.8px;font-size:25px;color:#d2d5dc;letter-spacing:0.1px;left:2053px;">Rocky Mountain</div>
<div class="t" style="top:478.8px;font-size:25px;color:#d2d5dc;letter-spacing:0.1px;left:2290.5px;">502</div>
<div class="t" style="top:478.8px;font-size:25px;color:#d2d5dc;letter-spacing:0.1px;left:2431px;">515</div>
<div class="t" style="top:478.8px;font-size:25px;color:#d2d5dc;letter-spacing:0.1px;left:2597.5px;">-2.52%</div>
<div class="t" style="top:576.8px;font-size:41px;color:#d4d6dc;letter-spacing:-0.427px;left:2030px;-webkit-text-stroke:0.5px #d4d6dc;">Key Takeaways</div>
<div class="t" style="top:666.3px;font-size:28px;color:#d4d6dc;letter-spacing:0.555px;left:2093px;"><b>National Capital</b> has the sharpest percentage decline (-4%),</div>
<div class="a" style="left:2059.6px;top:675.4px;width:11px;height:11px;border-radius:50%;background:#d4d6dc"></div>
<div class="t" style="top:706.3px;font-size:28px;color:#d4d6dc;letter-spacing:0.45px;left:2093px;">though it's a small market by count.</div>
<div class="t" style="top:746.3px;font-size:28px;color:#d4d6dc;letter-spacing:0.6px;left:2093px;"><b>Mid-Atlantic</b> is the most concerning in absolute terms — it lost <b>35</b></div>
<div class="a" style="left:2059.6px;top:755.4px;width:11px;height:11px;border-radius:50%;background:#d4d6dc"></div>
<div class="t" style="top:786.3px;font-size:28px;color:#d4d6dc;letter-spacing:0.45px;left:2093px;"><b>leases</b> YoY and is one of the larger markets.</div>
<div class="t" style="top:826.3px;font-size:28px;color:#d4d6dc;letter-spacing:0.575px;left:2093px;"><b>Northwest/Arctic</b> (-3.36%) and <b>Great Lakes</b> (-2.92%) are also</div>
<div class="a" style="left:2059.6px;top:835.4px;width:11px;height:11px;border-radius:50%;background:#d4d6dc"></div>
<div class="t" style="top:866.3px;font-size:28px;color:#d4d6dc;letter-spacing:0.45px;left:2093px;">notable.</div>
<div class="t" style="top:906.3px;font-size:28px;color:#d4d6dc;letter-spacing:0.455px;left:2093px;"><b>Greater Southwest</b> and <b>Southeast Sunbelt</b> are the most resilient,</div>
<div class="a" style="left:2059.6px;top:915.4px;width:11px;height:11px;border-radius:50%;background:#d4d6dc"></div>
<div class="t" style="top:946.3px;font-size:28px;color:#d4d6dc;letter-spacing:0.521px;left:2093px;">with declines of just -0.10% and -1.03% respectively.</div>
<div class="t" style="top:1018.5px;font-size:28px;color:#d4d6dc;letter-spacing:0.571px;left:2028.4px;">The broad-based nature of the decline suggests a systemic factor (e.g.,</div>
<div class="t" style="top:1057.7px;font-size:28px;color:#d4d6dc;letter-spacing:0.417px;left:2028.4px;">lease expirations not being renewed) rather than a regional issue.</div>
<div class="t" style="top:1130.3px;font-size:28px;color:#d4d6dc;letter-spacing:0.565px;left:2028.4px;">Here are some follow-up questions worth exploring:</div>
<div class="t" style="top:1202.0px;font-size:28px;color:#6e9fdc;letter-spacing:0.492px;left:2093px;">What is the lease expiration profile for Mid-Atlantic over the next 12</div>
<div class="a" style="left:2059.6px;top:1211.1px;width:11px;height:11px;border-radius:50%;background:#d4d6dc"></div>
<div class="t" style="top:1242.1px;font-size:28px;color:#6e9fdc;letter-spacing:0.45px;left:2093px;">months?</div>
<div class="t" style="top:1282.3px;font-size:28px;color:#6e9fdc;letter-spacing:0.562px;left:2093px;">Which industries are driving the lease count decline in the Mid-</div>
<div class="a" style="left:2059.6px;top:1291.4px;width:11px;height:11px;border-radius:50%;background:#d4d6dc"></div>
<div class="t" style="top:1322.3px;font-size:28px;color:#6e9fdc;letter-spacing:0.532px;left:2093px;">Atlantic and Northwest/Arctic regions?</div>
<div class="t" style="top:1362.3px;font-size:28px;color:#6e9fdc;letter-spacing:0.511px;left:2093px;">Show me renewal months left by region to identify where rollover</div>
<div class="a" style="left:2059.6px;top:1371.4px;width:11px;height:11px;border-radius:50%;background:#d4d6dc"></div>
<div class="t" style="top:1402.3px;font-size:28px;color:#6e9fdc;letter-spacing:0.455px;left:2093px;">risk is highest</div>
<svg class="a" style="left:2038px;top:1511px;" width="26" height="26" viewBox="0 0 26 26"><path d="M7.5 11.5v12.5M1.5 13a1.5 1.5 0 0 1 1.5-1.5h4.5v12.5h-4.5a1.5 1.5 0 0 1-1.5-1.5z" fill="none" stroke="#c5c8d0" stroke-width="2.4" stroke-linejoin="round"/><path d="M7.5 11.5c2.5-1 4-3 4-6.5v-2a2 2 0 0 1 4 0v7h6.5a2 2 0 0 1 2 2.3l-1.6 9.5a2 2 0 0 1-2 1.7h-12.9" fill="none" stroke="#c5c8d0" stroke-width="2.4" stroke-linejoin="round"/></svg>
<svg class="a" style="left:2086px;top:1511px;transform:scaleX(-1)" width="26" height="26" viewBox="0 0 26 26"><g transform="rotate(180 13 13)"><path d="M7.5 11.5v12.5M1.5 13a1.5 1.5 0 0 1 1.5-1.5h4.5v12.5h-4.5a1.5 1.5 0 0 1-1.5-1.5z" fill="none" stroke="#c5c8d0" stroke-width="2.4" stroke-linejoin="round"/><path d="M7.5 11.5c2.5-1 4-3 4-6.5v-2a2 2 0 0 1 4 0v7h6.5a2 2 0 0 1 2 2.3l-1.6 9.5a2 2 0 0 1-2 1.7h-12.9" fill="none" stroke="#c5c8d0" stroke-width="2.4" stroke-linejoin="round"/></g></svg>
<svg class="a" style="left:2135px;top:1510px;" width="27" height="28" viewBox="0 0 27 28"><path d="M3 18.5a2 2 0 0 1-1.5-2v-12.5a2.5 2.5 0 0 1 2.5-2.5h12.5a2 2 0 0 1 2 1.5" fill="none" stroke="#c5c8d0" stroke-width="2.4" stroke-linecap="round"/><rect x="6.5" y="6.5" width="19.5" height="20" rx="3.5" fill="none" stroke="#c5c8d0" stroke-width="2.4"/></svg>
<svg class="a" style="left:2182px;top:1510px;" width="28" height="28" viewBox="0 0 28 28"><circle cx="14" cy="13.5" r="12.3" fill="none" stroke="#c5c8d0" stroke-width="2.4"/><path d="M20 7.3l-9 3.9-3.6 9 9-3.9z" fill="none" stroke="#c5c8d0" stroke-width="2.4" stroke-linejoin="round"/></svg>
<div class="a" style="left:2020px;top:1688px;width:958px;height:188px;border-radius:26px;border:2px solid #383d46;background:#131419"></div>
<div class="t" style="top:1724.3px;font-size:28px;color:#a4a5a8;letter-spacing:0.44px;left:2046.8px;">Ask a question about your dashboard...</div>
<svg class="a" style="left:2046px;top:1815px;" width="30" height="29" viewBox="0 0 30 29"><path d="M7 21.5h-2.5a3 3 0 0 1-3-3v-13.5a3 3 0 0 1 3-3h17a3 3 0 0 1 3 3v9" fill="none" stroke="#c5c8d0" stroke-width="2.4" stroke-linecap="round"/><path d="M7 21.5l-1.8 4.8 6-4.8" fill="none" stroke="#c5c8d0" stroke-width="2.2" stroke-linejoin="round"/><path d="M6.5 8h12M6.5 13h9" stroke="#c5c8d0" stroke-width="2.4" stroke-linecap="round"/><path d="M23.5 17.5v10M18.5 22.5h10" stroke="#c5c8d0" stroke-width="2.4" stroke-linecap="round"/></svg>
<div class="a" style="left:2092px;top:1804px;width:332px;height:48px;border-radius:24px;background:#22252e"></div>
<svg class="a" style="left:2112px;top:1819px;" width="24" height="18" viewBox="0 0 24 18"><rect x="1" y="1" width="22" height="16" fill="none" stroke="#6e6e6e" stroke-width="2"/><rect x="1" y="1" width="22" height="3" fill="#9a9a9a"/><path d="M7 4v13M12 4v13M17 4v13" stroke="#6e6e6e" stroke-width="2"/></svg>
<div class="t" style="top:1815.8px;font-size:25px;color:#d8dae0;letter-spacing:0.075px;left:2148.7px;">Core Metrics Query</div>
<svg class="a" style="left:2393px;top:1821px;" width="15" height="15" viewBox="0 0 15 15"><path d="M1 1l13 13M14 1l-13 13" stroke="#9a9ca3" stroke-width="2.2" stroke-linecap="round"/></svg>
<svg class="a" style="left:2767px;top:1807px;" width="27" height="30" viewBox="0 0 27 30"><path d="M23 13.5l-9.5 9.5a6 6 0 0 1-8.5-8.5l10-10a4 4 0 0 1 5.7 5.7l-10 10a2 2 0 0 1-2.8-2.8l9-9" fill="none" stroke="#c5c8d0" stroke-width="2.4" stroke-linecap="round"/></svg>
<svg class="a" style="left:2841px;top:1807px;" width="23" height="30" viewBox="0 0 23 30"><rect x="6.5" y="1.2" width="10" height="17" rx="5" fill="none" stroke="#c5c8d0" stroke-width="2.4"/><path d="M1.5 13a10 10 0 0 0 20 0M11.5 23v5.5M5.5 28.5h12" fill="none" stroke="#c5c8d0" stroke-width="2.4" stroke-linecap="round"/></svg>
<div class="a" style="left:2896px;top:1794px;width:56px;height:56px;border-radius:50%;background:#22252d"></div>
<svg class="a" style="left:2913px;top:1810px;" width="24" height="26" viewBox="0 0 24 26"><path d="M12 24v-21M3.5 11l8.5-8.5 8.5 8.5" fill="none" stroke="#5c5f67" stroke-width="3" stroke-linecap="round" stroke-linejoin="round"/></svg>
<div class="a" style="left:2997px;top:454px;width:5px;height:1454px;background:#191c23;"></div>
<div class="a" style="left:3002px;top:454px;width:20px;height:1454px;background:#22252d;border-left:1px solid #35383f"></div>
<div class="a" style="left:3008px;top:1658px;width:12px;height:244px;border-radius:6px;background:#676a72"></div></body></html>
